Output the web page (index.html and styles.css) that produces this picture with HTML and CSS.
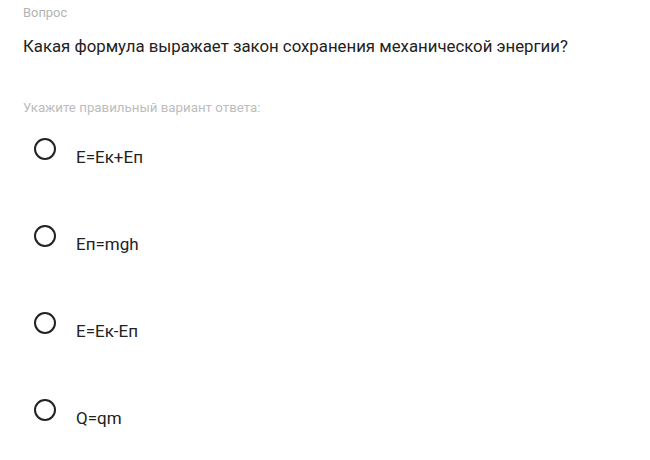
FILE: index.html
```html
<!DOCTYPE html>
<html lang="ru">
<head>
<meta charset="utf-8">
<link rel="stylesheet" href="styles.css">
</head>
<body>
<div class="quiz">
  <div class="label">Вопрос</div>
  <div class="question">Какая формула выражает закон сохранения механической энергии?</div>
  <div class="hint">Укажите правильный вариант ответа:</div>
  <div class="options">
    <div class="option"><span class="radio"></span><span class="text">E=Eк+Eп</span></div>
    <div class="option"><span class="radio"></span><span class="text">Eп=mgh</span></div>
    <div class="option"><span class="radio"></span><span class="text">E=Eк-Eп</span></div>
    <div class="option"><span class="radio"></span><span class="text">Q=qm</span></div>
  </div>
</div>
</body>
</html>
```
FILE: styles.css
```css
html, body {
  margin: 0;
  padding: 0;
  background: #fff;
}
body {
  font-family: Roboto, "Liberation Sans", sans-serif;
  color: #222;
  min-height: 460px;
}
.quiz {
  padding: 4px 0 30px 23px;
}
.label {
  font-size: 12.9px;
  line-height: 18px;
  color: #b4b4b4;
}
.question {
  margin-top: 13px;
  font-size: 16.8px;
  line-height: 22px;
  color: #222;
}
.hint {
  margin-top: 42px;
  font-size: 13.3px;
  line-height: 18px;
  color: #bdbdbd;
}
.options {
  display: flex;
  flex-direction: column;
  gap: 58px;
  margin-top: 21px;
}
.option {
  display: flex;
  align-items: flex-start;
}
.radio {
  box-sizing: border-box;
  width: 22px;
  height: 22px;
  border: 2.5px solid #222;
  border-radius: 50%;
  margin-left: 11px;
  flex: none;
}
.text {
  margin-left: 20px;
  margin-top: 9px;
  font-size: 17px;
  line-height: 20px;
  color: #222;
}
```
